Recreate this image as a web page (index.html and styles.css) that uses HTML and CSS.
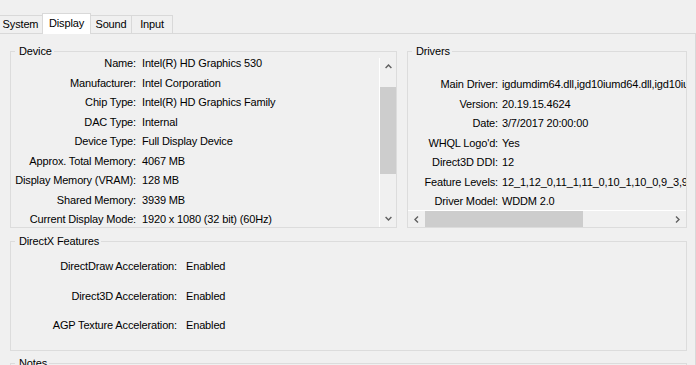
FILE: index.html
```html
<!DOCTYPE html>
<html lang="en">
<head>
  <meta charset="UTF-8">
  <title>DirectX Diagnostic Tool - Display</title>
  <link rel="stylesheet" href="styles.css">
</head>
<body>

<div class="dialog">
  <div class="tabs">
    <div class="tab tab-system">System</div>
    <div class="tab tab-display activa">Display</div>
    <div class="tab tab-sound">Sound</div>
    <div class="tab tab-input">Input</div>
  </div>

  <div class="panel">
    <div class="fila-superior">

      <fieldset class="grupo device">
        <legend>Device</legend>
        <div class="vscroll">
          <div class="vista">
            <dl class="props props-device">
              <dt>Name:</dt><dd>Intel(R) HD Graphics 530</dd>
              <dt>Manufacturer:</dt><dd>Intel Corporation</dd>
              <dt>Chip Type:</dt><dd>Intel(R) HD Graphics Family</dd>
              <dt>DAC Type:</dt><dd>Internal</dd>
              <dt>Device Type:</dt><dd>Full Display Device</dd>
              <dt>Approx. Total Memory:</dt><dd>4067 MB</dd>
              <dt>Display Memory (VRAM):</dt><dd>128 MB</dd>
              <dt>Shared Memory:</dt><dd>3939 MB</dd>
              <dt>Current Display Mode:</dt><dd>1920 x 1080 (32 bit) (60Hz)</dd>
            </dl>
          </div>
          <div class="vbar">
            <div class="flecha">
              <svg width="7" height="5" viewBox="0 0 7 5"><path d="M0.6 4 L3.5 1 L6.4 4" fill="none" stroke="#606060" stroke-width="1.4"/></svg>
            </div>
            <div class="vtrack"><div class="vthumb"></div></div>
            <div class="flecha">
              <svg width="7" height="5" viewBox="0 0 7 5"><path d="M0.6 1 L3.5 4 L6.4 1" fill="none" stroke="#606060" stroke-width="1.4"/></svg>
            </div>
          </div>
        </div>
      </fieldset>

      <fieldset class="grupo drivers">
        <legend>Drivers</legend>
        <div class="vista vista-drivers">
          <dl class="props props-drivers">
            <dt>Main Driver:</dt><dd>igdumdim64.dll,igd10iumd64.dll,igd10iumd64.dll,igd12umd64.dll</dd>
            <dt>Version:</dt><dd>20.19.15.4624</dd>
            <dt>Date:</dt><dd>3/7/2017 20:00:00</dd>
            <dt>WHQL Logo'd:</dt><dd>Yes</dd>
            <dt>Direct3D DDI:</dt><dd>12</dd>
            <dt>Feature Levels:</dt><dd>12_1,12_0,11_1,11_0,10_1,10_0,9_3,9_2,9_1</dd>
            <dt>Driver Model:</dt><dd>WDDM 2.0</dd>
          </dl>
        </div>
        <div class="hbar">
          <div class="flecha">
            <svg width="5" height="7" viewBox="0 0 5 7"><path d="M4 0.6 L1 3.5 L4 6.4" fill="none" stroke="#606060" stroke-width="1.4"/></svg>
          </div>
          <div class="htrack"><div class="hthumb"></div></div>
          <div class="flecha">
            <svg width="5" height="7" viewBox="0 0 5 7"><path d="M1 0.6 L4 3.5 L1 6.4" fill="none" stroke="#606060" stroke-width="1.4"/></svg>
          </div>
        </div>
      </fieldset>

    </div>

    <fieldset class="grupo features">
      <legend>DirectX Features</legend>
      <dl class="props props-features">
        <dt>DirectDraw Acceleration:</dt><dd>Enabled</dd>
        <dt>Direct3D Acceleration:</dt><dd>Enabled</dd>
        <dt>AGP Texture Acceleration:</dt><dd>Enabled</dd>
      </dl>
    </fieldset>

    <fieldset class="grupo notes">
      <legend>Notes</legend>
    </fieldset>
  </div>
</div>

</body>
</html>
```

FILE: styles.css
```css
* {
  box-sizing: border-box;
}

body {
  margin: 0;
  background: #f0f0f0;
  font-family: 'Liberation Sans', Arial, sans-serif;
  font-size: 11px;
  letter-spacing: -0.15px;
  color: #000;
  overflow: hidden;
}

.dialog {
  margin-left: -2px;
  width: 698px;
  padding-top: 13px;
}

/* pestañas */
.tabs {
  display: flex;
  align-items: flex-end;
  height: 20px;
}

.tab {
  height: 18px;
  line-height: 17px;
  text-align: center;
  background: #f0f0f0;
  border: 1px solid #d9d9d9;
  border-bottom: none;
  margin-right: -1px;
}

.tab-system { width: 45px; }
.tab-display { width: 49px; }
.tab-sound { width: 42px; }
.tab-input { width: 42px; }

.tab.activa {
  position: relative;
  z-index: 1;
  height: 21px;
  line-height: 18px;
  margin-bottom: -1px;
  background: #fff;
}

.panel {
  border: 1px solid #d9d9d9;
  padding: 11px 8px 0 11px;
  height: 400px;
}

.fila-superior {
  display: flex;
  gap: 10px;
}

/* cuadros de grupo */
.grupo {
  margin: 0;
  padding: 0;
  min-width: 0;
  border: 1px solid #dcdcdc;
}

.grupo legend {
  margin-left: 4px;
  padding: 0 2px 0 4px;
  line-height: 13px;
}

.device {
  width: 387px;
}

.drivers {
  flex: 1;
}

.vscroll {
  display: flex;
  height: 169px;
}

.vista {
  flex: 1;
  overflow: hidden;
}

.props {
  display: grid;
  margin: 0;
  line-height: 19.5px;
  white-space: nowrap;
}

.props dt {
  text-align: right;
}

.props dd {
  margin: 0;
}

.props-device {
  grid-template-columns: 125px max-content;
  column-gap: 6px;
  row-gap: 8.5px;
  line-height: 11px;
}

.vista-drivers {
  height: 152px;
}

.props-drivers {
  grid-template-columns: 90px max-content;
  column-gap: 4px;
  padding-top: 17px;
}

/* barras de desplazamiento */
.vbar {
  width: 17px;
  border-left: 1px solid #fff;
  display: flex;
  flex-direction: column;
}

.flecha {
  flex: 0 0 17px;
  display: flex;
  align-items: center;
  justify-content: center;
}

.vbar .flecha {
  height: 17px;
}

.vtrack {
  flex: 1;
}

.vthumb {
  margin-top: 12px;
  height: 87px;
  background: #cdcdcd;
}

.hbar {
  height: 17px;
  border-top: 1px solid #fff;
  display: flex;
}

.hbar .flecha {
  width: 17px;
}

.htrack {
  flex: 1;
}

.hthumb {
  width: 158px;
  height: 100%;
  background: #cdcdcd;
}

/* DirectX Features */
.features {
  margin-top: 7px;
  height: 116px;
}

.props-features {
  grid-template-columns: 166px max-content;
  column-gap: 9px;
  line-height: 29.5px;
  padding-top: 4px;
}

.notes {
  margin-top: 6px;
  height: 60px;
}
```
